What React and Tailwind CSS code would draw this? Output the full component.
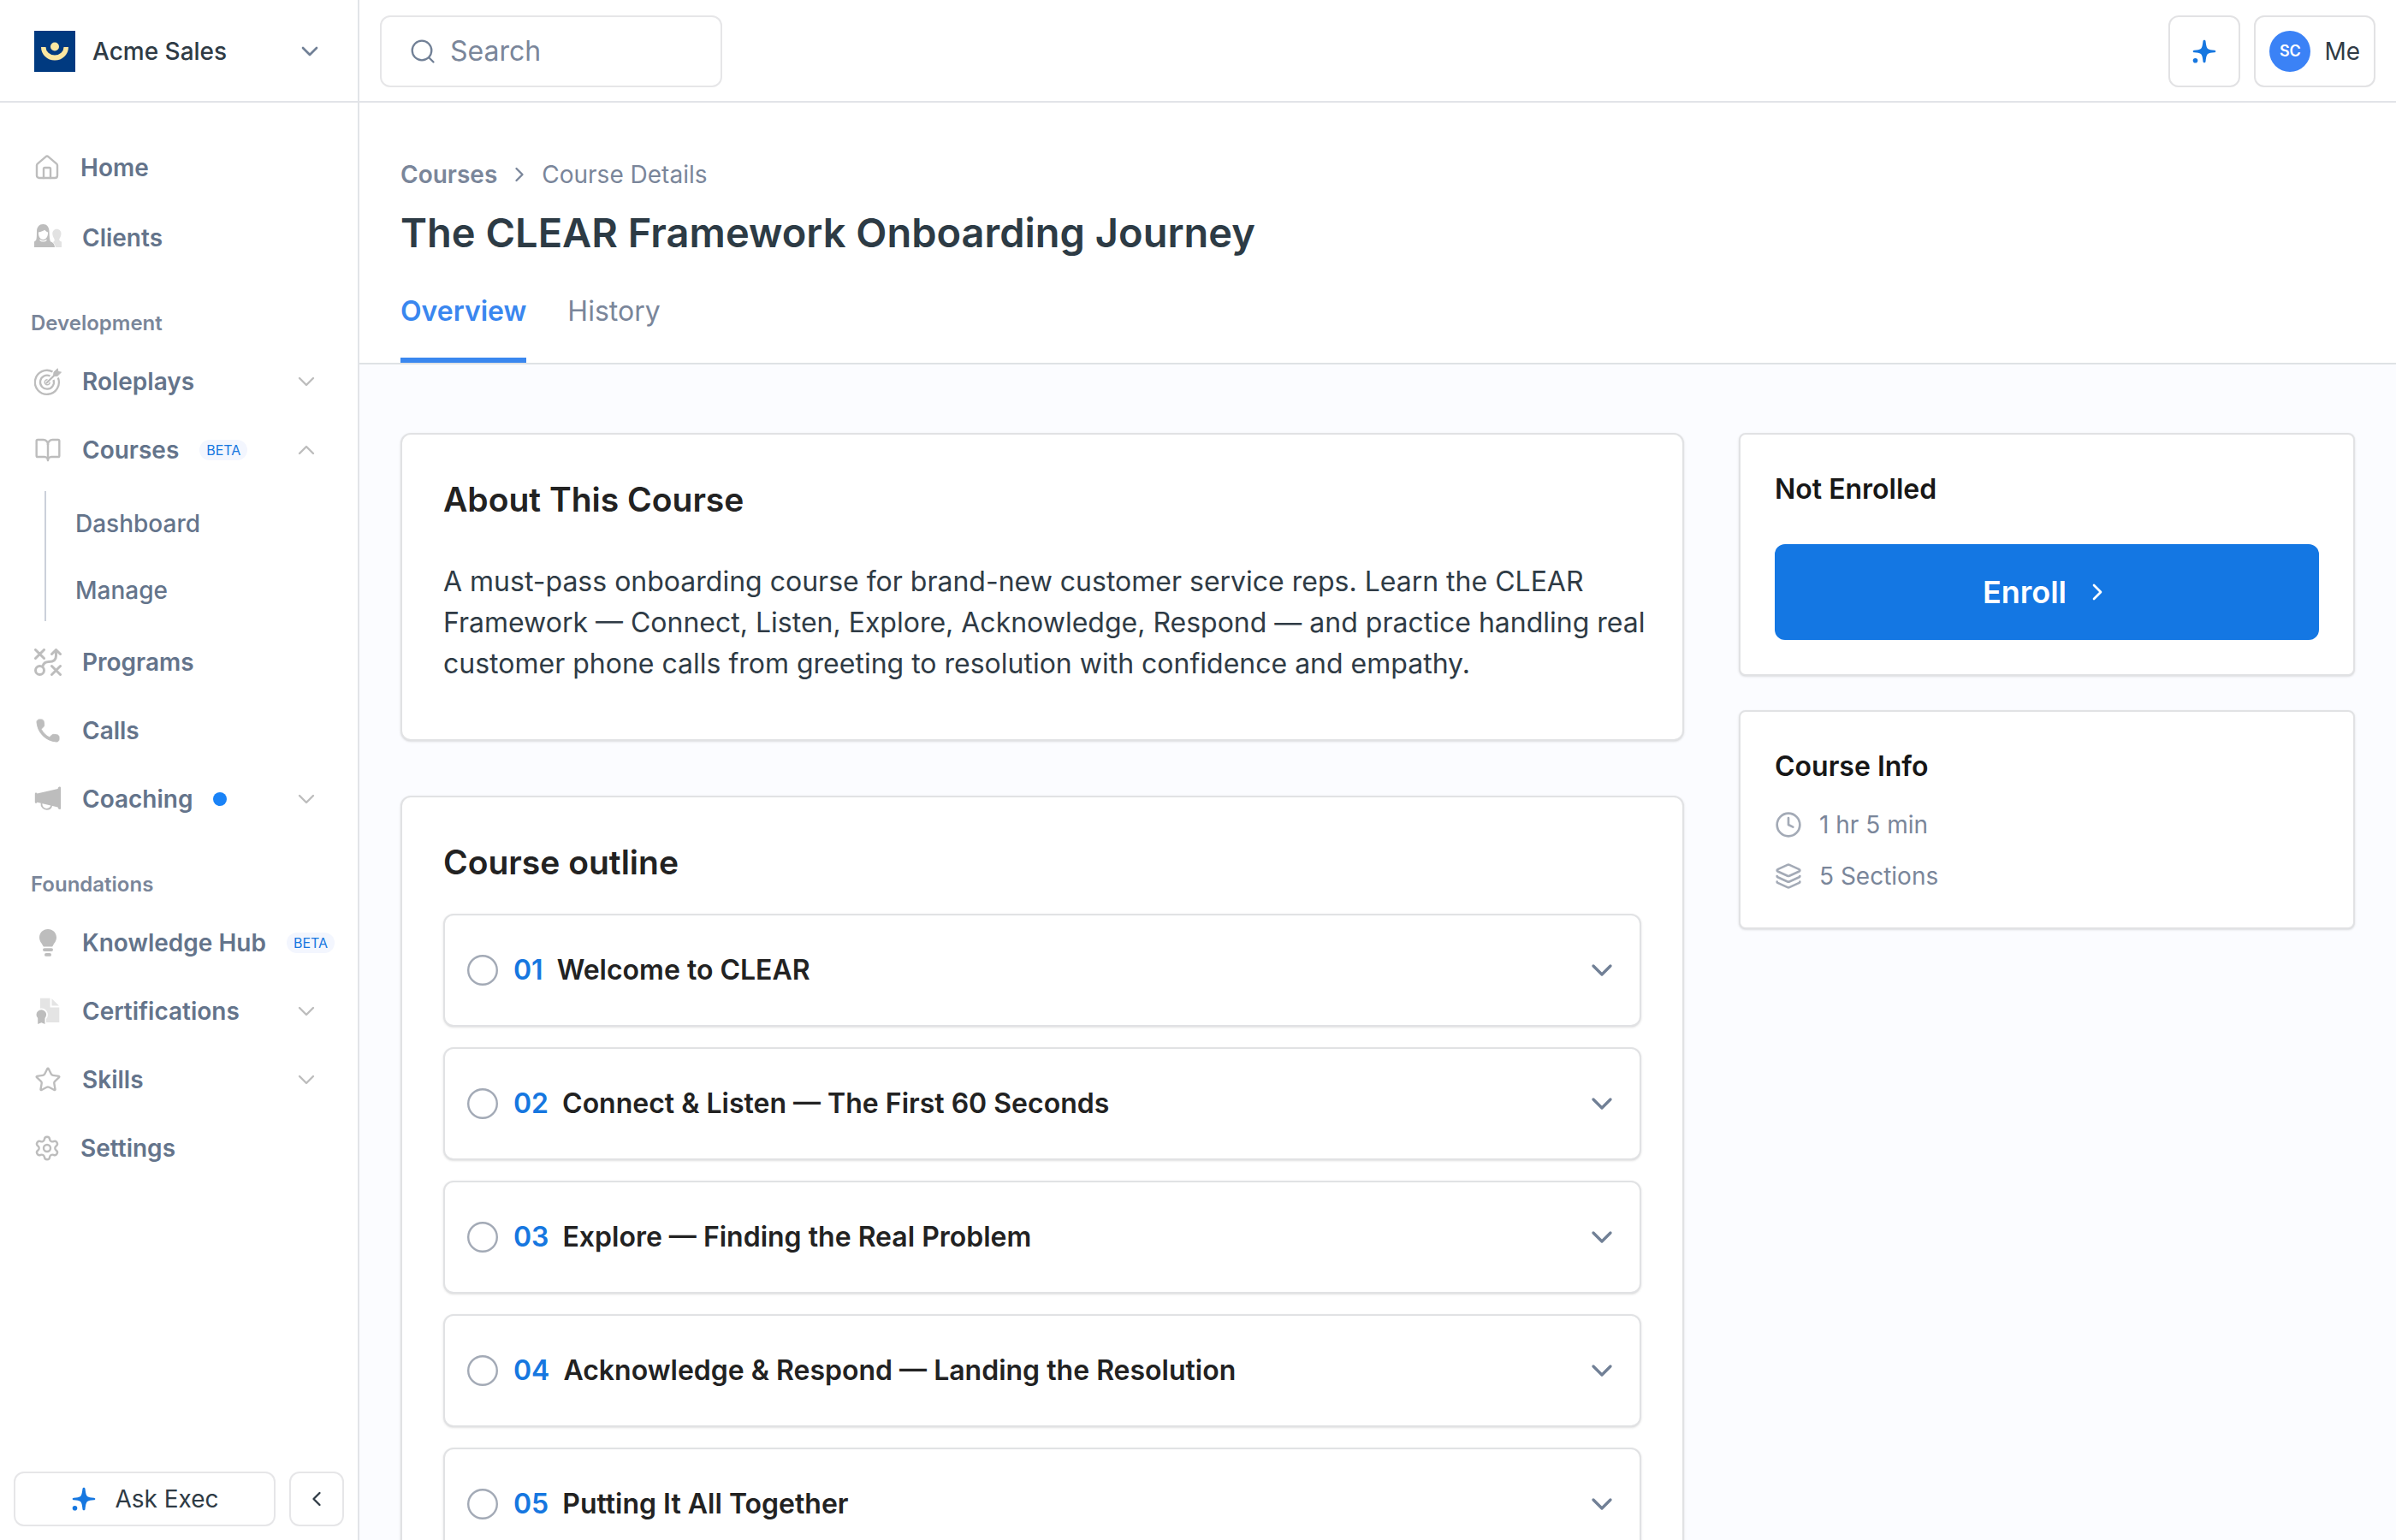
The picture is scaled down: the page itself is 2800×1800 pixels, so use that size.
import React from 'react'
import { BookOpen, ChevronDown, ChevronLeft, ChevronRight, ChevronUp, Clock, House, Layers, Settings, Star } from 'lucide-react'

function LogoMark() {
  return (
    <svg viewBox="0 0 48 48" className="size-12 shrink-0">
      <rect width="48" height="48" fill="#003a80" />
      <circle cx="24" cy="18.5" r="5" fill="#fbe7a1" />
      <path d="M8 19h5.5a10.5 9.5 0 0 0 21 0H40a16 15.5 0 0 1-32 0z" fill="#fbe7a1" />
    </svg>
  )
}

function SparkleIcon() {
  return (
    <svg viewBox="0 0 32 32" className="size-8 shrink-0" fill="#1677e0">
      <path d="M16 2.7c.9 0 1.4.6 1.5 1.4.5 4.3.9 6.6 1.8 7.9.4.6.6.8 1.2 1.2 1.3.8 3.3 1.1 7.4 1.5.9.1 1.4.6 1.4 1.3s-.5 1.2-1.4 1.3c-4.1.4-6.1.7-7.4 1.5-.6.4-.8.6-1.2 1.2-.9 1.3-1.3 3.6-1.8 7.9-.1.8-.6 1.4-1.5 1.4s-1.4-.6-1.500-1.4c-.5-4.3-.9-6.6-1.8-7.9-.4-.6-.6-.8-1.2-1.2-1.3-.8-3.3-1.1-7.4-1.5-.9-.1-1.4-.6-1.4-1.3s.5-1.2 1.4-1.3c4.1-.4 6.1-.7 7.4-1.5.6-.4.8-.6 1.2-1.2.9-1.3 1.3-3.6 1.8-7.9.1-.8.6-1.4 1.5-1.4z" />
      <circle cx="5.5" cy="26.7" r="2.8" />
    </svg>
  )
}

function SearchIcon() {
  return (
    <svg viewBox="0 0 32 32" className="size-8 shrink-0" fill="none" stroke="#718096" strokeWidth="2.3" strokeLinecap="round">
      <circle cx="15" cy="15" r="11.3" />
      <path d="M23.2 23.2l5.3 5.3" />
    </svg>
  )
}

function ClientsIcon() {
  return (
    <svg viewBox="0 0 32 32" className="size-8 shrink-0">
      <path d="M26.3 5.8c3.3 0 5.3 2.5 5.2 5.6-.1 2.7-1.6 4.3-2.2 6-.3 1.6.3 2.3 2.7 3V27h-7.2c-.4-2.7-1.3-4.8-3-6 1.6-.5 2.2-1.5 1.8-3.2-.6-1.9-2.2-3.7-2.3-6.3-.1-3.2 1.8-5.7 5-5.7z" fill="#e2e2e2" />
      <path d="M10.3 0c4.5 0 7 3.3 7.2 8 .2 4 .3 8.300 1 11 .2 1 .9 1.6 2 2.1 2.2 1 3.2 3 3.5 5.9H0v-6.5c1.7-.8 2.3-1.8 2.6-3.5.5-2.9.3-6.3.4-9C3.2 3.3 5.9 0 10.3 0z" fill="#bdbdbd" />
      <path d="M5 9.5c3-.3 5.8-1.7 7.4-2.7 1 1.5 2.2 2.4 3.6 2.700.2 4-1.500 8.500-5.600 8.500S4.800 13.500 5 9.500z" fill="#fff" />
      <path d="M6.5 18.3c2 2.2 6 2.2 8 0" fill="none" stroke="#fff" strokeWidth="1.2" />
    </svg>
  )
}

function TargetIcon() {
  return (
    <svg viewBox="0 0 32 32" className="size-8 shrink-0" fill="none" stroke="#bdbdbd" strokeWidth="2.3">
      <path d="M21.5 4.5A14 14 0 1 0 27.800 11.5" />
      <path d="M18.5 9.5A8 8 0 1 0 22.5 14" />
      <path d="M15.5 13.8a3 3 0 1 0 2.7 3" strokeWidth="1.5" />
      <path d="M14.5 17.5L25.5 6.8" strokeLinecap="round" />
      <path d="M22.5 9.5l.5-4.5L27.3.8l.6 3.6 3.6.7-4.3 4.2z" fill="#bdbdbd" strokeWidth="1" />
    </svg>
  )
}

function StrategyIcon() {
  return (
    <svg viewBox="0 0 32 32" className="size-8 shrink-0" fill="none" stroke="#bdbdbd" strokeWidth="3" strokeLinecap="round" strokeLinejoin="round">
      <path d="M1.5 1.5l10 10M11.5 1.5l-10 10M20.5 20.5l10 10M30.5 20.5l-10 10" />
      <circle cx="6.5" cy="25.5" r="5" />
      <path d="M10 20.5c1-4 3.5-5 7-5 5 0 8.5-1.5 8.5-7V2M20.5 6.5l5-5 5 5" />
    </svg>
  )
}

function PhoneIcon() {
  return (
    <svg viewBox="1 1 22 22" className="size-8 shrink-0" fill="#bdbdbd" stroke="#bdbdbd" strokeWidth="0.6">
      <path d="M19.23 15.26l-2.54-.29c-.61-.07-1.21.14-1.64.57l-1.84 1.84c-2.83-1.44-5.15-3.75-6.59-6.59l1.85-1.85c.43-.43.64-1.03.57-1.64l-.29-2.52c-.12-1.01-.97-1.77-1.99-1.77H5.03c-1.13 0-2.07.94-2 2.07.53 8.54 7.36 15.36 15.89 15.89 1.13.07 2.07-.87 2.07-2v-1.73c.01-1.01-.75-1.86-1.76-1.98z" />
    </svg>
  )
}

function MegaphoneIcon() {
  return (
    <svg viewBox="0 0 32 32" className="size-8 shrink-0">
      <path d="M.8 10c0-1.6 2-2 2.7-.4L27.6 4c.2-1.6.9-2.5 2-2.5.9 0 1.5.6 1.5 1.6v23.3c0 1-.6 1.6-1.5 1.6-1.1 0-1.8-.9-2-2.5L3.5 19.8c-.7 1.7-2.7 1.3-2.7-.3z" fill="#bdbdbd" />
      <path d="M8.5 20.5c-.6 4.3 2.4 7.3 6 7.3 3 0 5.3-1.8 5.8-4.8" fill="none" stroke="#bdbdbd" strokeWidth="1.8" />
    </svg>
  )
}

function BulbIcon() {
  return (
    <svg viewBox="0 0 32 32" className="size-8 shrink-0" fill="#bdbdbd">
      <path d="M16 0c5.7 0 10 4.3 10 9.8 0 4.4-2.5 6.2-4 9.2-.4 1-.8 1.5-2 1.5h-8c-1.2 0-1.6-.5-2-1.5-1.5-3-4-4.8-4-9.2C6 4.3 10.3 0 16 0z" />
      <rect x="10" y="22.2" width="12" height="3.8" rx="1.9" />
      <rect x="12" y="28" width="8" height="3.8" rx="1.9" />
    </svg>
  )
}

function CertificateIcon() {
  return (
    <svg viewBox="0 0 32 32" className="size-8 shrink-0">
      <path d="M7 .8h11.5v10.7h10.8V29H7z" fill="#e4e4e4" />
      <path d="M20.5 1.3l8.5 8.2h-8.5z" fill="#e4e4e4" />
      <path d="M8.3 12.5a7.5 7.5 0 0 1 5.7 12.4V32H2.6v-7.1A7.5 7.5 0 0 1 8.3 12.5z" fill="#fff" />
      <circle cx="8.3" cy="20" r="5.8" fill="#bdbdbd" />
      <path d="M4.2 23.5h8.3V31l-4.1-1.8L4.2 31z" fill="#bdbdbd" />
    </svg>
  )
}

const topLinks = [
  { label: 'Home', icon: <House className="-mx-px size-8 shrink-0" strokeWidth={1.8} /> },
  { label: 'Clients', icon: <ClientsIcon /> },
]

const developmentLinks = [
  { label: 'Roleplays', icon: <TargetIcon />, chevron: 'down' },
  { label: 'Courses', icon: <BookOpen className="size-8 shrink-0" strokeWidth={1.8} />, beta: true, chevron: 'up', children: ['Dashboard', 'Manage'] },
  { label: 'Programs', icon: <StrategyIcon /> },
  { label: 'Calls', icon: <PhoneIcon /> },
  { label: 'Coaching', icon: <MegaphoneIcon />, dot: true, chevron: 'down' },
]

const foundationLinks = [
  { label: 'Knowledge Hub', icon: <BulbIcon />, beta: true },
  { label: 'Certifications', icon: <CertificateIcon />, chevron: 'down' },
  { label: 'Skills', icon: <Star className="size-8 shrink-0" strokeWidth={1.8} />, chevron: 'down' },
  { label: 'Settings', icon: <Settings className="-mx-px size-8 shrink-0" strokeWidth={1.8} /> },
]

const sections = [
  { number: '01', title: 'Welcome to CLEAR' },
  { number: '02', title: 'Connect & Listen — The First 60 Seconds' },
  { number: '03', title: 'Explore — Finding the Real Problem' },
  { number: '04', title: 'Acknowledge & Respond — Landing the Resolution' },
  { number: '05', title: 'Putting It All Together' },
]

function NavItem({ item }) {
  const Chevron = item.chevron === 'up' ? ChevronUp : ChevronDown
  return (
    <li>
      <a href="#" className="flex h-20 items-center pl-10 pr-7 text-[#bdbdbd]">
        {item.icon}
        <span className="ml-6 whitespace-nowrap text-[28px] font-semibold text-[#64748b]">{item.label}</span>
        {item.beta && (
          <span className="ml-6 rounded-full bg-[#f3f6fe] px-2 text-base leading-6 text-[#1677e0]">BETA</span>
        )}
        {item.dot && <span className="ml-6 size-4 rounded-full bg-[#1a83f7]" />}
        {item.chevron && <Chevron className="ml-auto mr-4 size-8" strokeWidth={1.8} />}
      </a>
      {item.children && (
        <ul className="my-2 ml-[52px] flex flex-col gap-1 border-l-2 border-[#cbd0da]">
          {item.children.map((child) => (
            <li key={child}>
              <a href="#" className="flex h-[74px] items-center pl-[34px] pt-0.5 text-[28px] font-medium text-[#64748b]">{child}</a>
            </li>
          ))}
        </ul>
      )}
    </li>
  )
}

function NavGroup({ title, items }) {
  return (
    <div>
      <h2 className="pb-2 pl-9 pt-10 text-2xl font-semibold leading-10 text-[#7a869a]">{title}</h2>
      <ul>
        {items.map((item) => (
          <NavItem key={item.label} item={item} />
        ))}
      </ul>
    </div>
  )
}

function Sidebar() {
  return (
    <aside className="flex w-[420px] shrink-0 flex-col border-r-2 border-[#e2e4e8] bg-white">
      <button className="flex h-[120px] shrink-0 items-center border-b-2 border-[#e2e4e8] px-10 pt-0.5">
        <LogoMark />
        <span className="ml-5 text-[28px] font-medium text-[#2f3b45]">Acme Sales</span>
        <ChevronDown className="ml-auto size-8 text-[#718096]" strokeWidth={2} />
      </button>
      <nav className="min-h-0 flex-1 overflow-hidden pt-9">
        <ul className="flex flex-col gap-0.5">
          {topLinks.map((item) => (
            <NavItem key={item.label} item={item} />
          ))}
        </ul>
        <NavGroup title="Development" items={developmentLinks} />
        <NavGroup title="Foundations" items={foundationLinks} />
      </nav>
      <div className="flex gap-4 p-4">
        <button className="flex h-16 flex-1 items-center justify-center gap-5 rounded-xl border-2 border-[#e6e6e8] text-[28px] text-[#2f3b45]">
          <SparkleIcon />
          Ask Exec
        </button>
        <button aria-label="Collapse sidebar" className="flex size-16 items-center justify-center rounded-xl border-2 border-[#e6e6e8] text-[#2f3b45]">
          <ChevronLeft className="size-7" />
        </button>
      </div>
    </aside>
  )
}

function TopBar() {
  return (
    <header className="flex h-[120px] shrink-0 items-center gap-4 border-b-2 border-[#e2e4e8] bg-white px-6 pt-0.5">
      <label className="flex h-[84px] w-[400px] items-center gap-4 rounded-xl border-2 border-[#e6e6e8] px-8">
        <SearchIcon />
        <input type="search" aria-label="Search" placeholder="Search" className="min-w-0 flex-1 text-[32px] outline-none placeholder:text-[#7a869a]" />
      </label>
      <button aria-label="Ask Exec" className="ml-auto flex size-[84px] items-center justify-center rounded-xl border-2 border-[#e2e2e4]">
        <SparkleIcon />
      </button>
      <button className="flex h-[84px] items-center gap-4 rounded-xl border-2 border-[#e2e2e4] px-4 text-[28px] text-[#2f3b45]">
        <span className="flex size-12 items-center justify-center rounded-full bg-[#3b82f6] text-lg font-semibold text-white">SC</span>
        Me
      </button>
    </header>
  )
}

function PageHeader() {
  return (
    <div className="border-b-2 border-[#dfe2e5] bg-white px-12 pt-16">
      <div className="flex items-center gap-3 text-[28px] leading-10 text-[#7a869a]">
        <a href="#" className="font-semibold">Courses</a>
        <ChevronRight className="size-7" />
        <span>Course Details</span>
      </div>
      <h1 className="mt-4 text-[47px] font-semibold leading-[64px] text-[#2d3b45]">The CLEAR Framework Onboarding Journey</h1>
      <div role="tablist" className="mt-8 flex gap-12 text-[32px] leading-[56px]">
        <button role="tab" aria-selected="true" className="border-b-[6px] border-[#3a87ef] pb-[26px] font-semibold text-[#3a87ef]">Overview</button>
        <button role="tab" aria-selected="false" className="border-b-[6px] border-transparent pb-[26px] text-[#7a869a]">History</button>
      </div>
    </div>
  )
}

function SectionRow({ section }) {
  return (
    <button className="flex h-[132px] items-center rounded-xl border-2 border-[#e1e2e4] bg-white px-6 text-left text-[32px] font-semibold shadow-sm">
      <svg viewBox="0 0 40 40" className="size-10 shrink-0" fill="none" stroke="#a3aab6" strokeWidth="2.4">
        <circle cx="20" cy="20" r="16.8" />
      </svg>
      <span className="ml-4 text-[#1677e0]">{section.number}</span>
      <span className="ml-4 text-[#222222]">{section.title}</span>
      <ChevronDown className="ml-auto size-10 text-[#718096]" strokeWidth={2} />
    </button>
  )
}

export default function App() {
  return (
    <div className="flex h-screen overflow-hidden bg-[#fbfcff] font-['Inter',sans-serif]">
      <Sidebar />
      <div className="flex min-w-0 flex-1 flex-col">
        <TopBar />
        <main className="min-h-0 flex-1 overflow-y-auto [scrollbar-width:none]">
          <PageHeader />
          <div className="flex items-start gap-16 px-12 py-20">
            <div className="flex min-w-0 flex-1 flex-col gap-16">
              <section className="rounded-xl border-2 border-[#e1e2e4] bg-white pb-16 pl-12 pr-10 pt-12 shadow-sm">
                <h2 className="text-[39px] font-semibold leading-[56px] text-[#222222]">About This Course</h2>
                <p className="mt-11 text-[32px] leading-[48px] text-[#2f3b45]">
                  A must-pass onboarding course for brand-new customer service reps. Learn the CLEAR Framework — Connect, Listen, Explore, Acknowledge, Respond — and practice handling real customer phone calls from greeting to resolution with confidence and empathy.
                </p>
              </section>
              <section className="rounded-xl border-2 border-[#e1e2e4] bg-white p-12 shadow-sm">
                <h2 className="text-[39px] font-semibold leading-[56px] text-[#222222]">Course outline</h2>
                <div className="mt-8 flex flex-col gap-6">
                  {sections.map((section) => (
                    <SectionRow key={section.number} section={section} />
                  ))}
                </div>
              </section>
            </div>
            <aside className="flex w-[720px] shrink-0 flex-col gap-10">
              <section className="rounded-lg border-2 border-[#e1e2e4] bg-white p-10 shadow-sm">
                <h3 className="text-[32px] font-semibold leading-[48px] text-[#171717]">Not Enrolled</h3>
                <button className="mt-10 flex h-28 w-full items-center justify-center gap-5 rounded-xl bg-[#1477e3] text-4xl font-semibold text-white">
                  Enroll
                  <ChevronRight className="size-8" />
                </button>
              </section>
              <section className="rounded-lg border-2 border-[#e1e2e4] bg-white p-10 shadow-sm">
                <h3 className="text-[32px] font-semibold leading-[48px] text-[#171717]">Course Info</h3>
                <ul className="mt-6 flex flex-col gap-5 text-[28px] leading-10 text-[#7a869a]">
                  <li className="flex items-center gap-5">
                    <Clock className="size-8 text-[#a3aab6]" strokeWidth={2} />
                    1 hr 5 min
                  </li>
                  <li className="flex items-center gap-5">
                    <Layers className="size-8 text-[#a3aab6]" strokeWidth={2} />
                    5 Sections
                  </li>
                </ul>
              </section>
            </aside>
          </div>
        </main>
      </div>
    </div>
  )
}
